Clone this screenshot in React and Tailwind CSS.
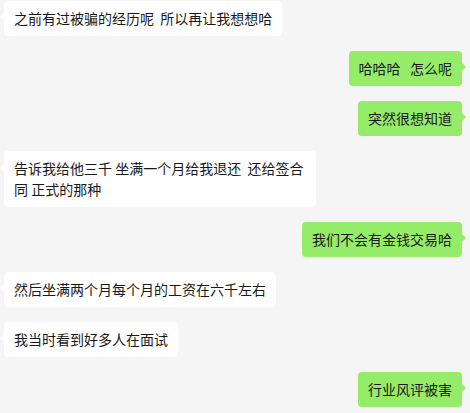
const messages = [
  { me: false, text: '之前有过被骗的经历呢  所以再让我想想哈' },
  { me: true, text: '哈哈哈   怎么呢' },
  { me: true, text: '突然很想知道' },
  { me: false, text: '告诉我给他三千 坐满一个月给我退还  还给签合同 正式的那种' },
  { me: true, text: '我们不会有金钱交易哈' },
  { me: false, text: '然后坐满两个月每个月的工资在六千左右' },
  { me: false, text: '我当时看到好多人在面试' },
  { me: true, text: '行业风评被害' },
]

function Bubble({ me, text }) {
  return (
    <div className={me ? 'flex justify-end pr-[4px]' : 'flex justify-start pl-[4px]'}>
      <div
        className={
          'relative max-w-[312px] rounded-[4px] px-[10px] py-[7px] text-[14px] leading-[21px] whitespace-pre-wrap text-[#191919] ' +
          (me ? 'bg-[#95ec69]' : 'bg-white')
        }
      >
        {me ? (
          <span className="absolute right-[-4px] top-[11px] h-0 w-0 border-y-[5px] border-l-[5px] border-y-transparent border-l-[#95ec69]" />
        ) : (
          <span className="absolute left-[-4px] top-[11px] h-0 w-0 border-y-[5px] border-r-[5px] border-y-transparent border-r-white" />
        )}
        {text}
      </div>
    </div>
  )
}

export default function App() {
  return (
    <div
      className="w-[470px] h-[413px] overflow-hidden bg-[#f5f5f5] pt-[1px] pr-[4px] flex flex-col gap-[15px]"
      style={{ fontFamily: '"Noto Sans CJK SC", "Noto Sans", sans-serif' }}
    >
      {messages.map((m, i) => (
        <Bubble key={i} {...m} />
      ))}
    </div>
  )
}
